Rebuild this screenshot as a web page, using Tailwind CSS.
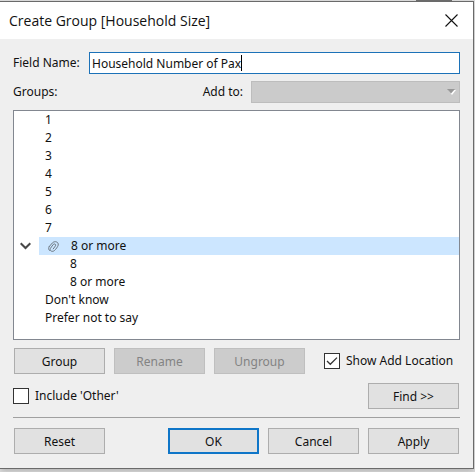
<!DOCTYPE html>
<html lang="en">
<head>
<meta charset="utf-8">
<meta name="viewport" content="width=device-width, initial-scale=1">
<title>Create Group</title>
<script src="https://cdn.jsdelivr.net/npm/@tailwindcss/browser@4"></script>
</head>
<body class="min-h-screen bg-[#d9d9d9] pt-px pr-px font-['Noto_Sans',sans-serif] text-[12px] leading-[18px] text-[#111]">
<div class="absolute top-0 right-[23px] h-px w-9 bg-[#6b6b6b]"></div>
<main role="dialog" aria-labelledby="title" class="border-y border-r border-[#6a6a6a] bg-[#efefef] shadow-md">
  <header class="flex h-[37px] items-center justify-between bg-white pr-[15px] pl-[9px]">
    <h1 id="title" class="font-['Open_Sans',sans-serif] text-[14px]">Create Group [Household Size]</h1>
    <button aria-label="Close" class="flex">
      <svg class="size-[13px]" viewBox="0 0 13 13" fill="none" stroke="#111" stroke-width="1.1"><path d="M.5.5l12 12M12.5.5l-12 12"/></svg>
    </button>
  </header>
  <div class="px-[13px] pt-[13px] pb-[14px]">
    <div class="flex items-center">
      <label for="name" class="w-[76px]">Field Name:</label>
      <div class="relative flex-1">
        <input id="name" type="text" value="Household Number of Pax" class="block h-[22px] w-full border border-[#1c72b8] bg-white px-[2px] pt-px outline-none">
        <span class="absolute top-[3px] left-[152px] h-4 w-px bg-black"></span>
      </div>
    </div>
    <div class="mt-[7px] flex items-center">
      <span id="groups" class="flex-1">Groups:</span>
      <label for="addto" class="mr-2">Add to:</label>
      <div class="relative w-[209px]">
        <select id="addto" disabled class="block h-[22px] w-full appearance-none border border-[#bdbdbd] bg-[#cbcbcb] opacity-100"><option></option></select>
        <svg class="pointer-events-none absolute top-[8px] right-[4px] h-[6px] w-[9px]" viewBox="0 0 9 6"><path d="M1 1h8L5 6z" fill="#fff"/><path d="M0 0h8L4 4.500z" fill="#979797"/></svg>
      </div>
    </div>
    <ul role="tree" aria-labelledby="groups" class="mt-[7px] h-[230px] border border-[#828790] bg-white">
      <li role="treeitem" class="pl-[31px]">1</li>
      <li role="treeitem" class="pl-[31px]">2</li>
      <li role="treeitem" class="pl-[31px]">3</li>
      <li role="treeitem" class="pl-[31px]">4</li>
      <li role="treeitem" class="pl-[31px]">5</li>
      <li role="treeitem" class="pl-[31px]">6</li>
      <li role="treeitem" class="pl-[31px]">7</li>
      <li role="treeitem" aria-expanded="true" aria-selected="true">
        <div class="flex">
          <div class="flex w-[25px] items-center pl-[6px]">
            <svg class="h-[8px] w-[11px]" viewBox="0 0 11 8" fill="none" stroke="#484848" stroke-width="2"><path d="M.7 1.200L5.500 6 10.300 1.200"/></svg>
          </div>
          <div class="flex flex-1 items-center gap-3 bg-[#cce6ff] pl-[9px]">
            <svg class="size-[11px]" viewBox="0 0 11 11" fill="none" stroke="#6d7882" stroke-width="1" stroke-linecap="round"><path d="M1.200 5.600L4.400 1.900C6.300-.2 10.900.4 10.200 4.200C9.600 6 8 8 6.500 9.500C4.500 11.300 1.200 10 2.400 7.400L5.200 3.500C6.400 2.200 8.300 3.200 7.500 4.800L5.200 7.900M1.200 5.600C.3 7.200.4 8.400 1.500 9.500"/></svg>
            <span>8 or more</span>
          </div>
        </div>
        <ul role="group">
          <li role="treeitem" class="pl-[56px]">8</li>
          <li role="treeitem" class="pl-[56px]">8 or more</li>
        </ul>
      </li>
      <li role="treeitem" class="pl-[31px]">Don't know</li>
      <li role="treeitem" class="pl-[31px]">Prefer not to say</li>
    </ul>
    <div class="mt-2 flex items-center gap-[9px] pl-px">
      <button class="h-[26px] w-[91px] border border-[#adadad] bg-[#e1e1e1] pt-px">Group</button>
      <button disabled class="h-[26px] w-[91px] border border-[#bfbfbf] bg-[#cccccc] pt-px text-[#838383]">Rename</button>
      <button disabled class="h-[26px] w-[91px] border border-[#bfbfbf] bg-[#cccccc] pt-px text-[#838383]">Ungroup</button>
      <label class="ml-[10px] flex items-center gap-[6px]">
        <span class="relative flex">
          <input type="checkbox" checked class="size-4 appearance-none border border-[#333] bg-white">
          <svg class="pointer-events-none absolute inset-0 size-4" viewBox="0 0 16 16" fill="none" stroke="#333" stroke-width="1.300"><path d="M3 8l3.300 3.300L13 4.600"/></svg>
        </span>
        Show Add Location
      </label>
    </div>
    <div class="mt-[9px] flex items-center justify-between pr-px">
      <label class="flex items-center gap-[6px]">
        <input type="checkbox" class="size-4 appearance-none border border-[#333] bg-white">
        Include 'Other'
      </label>
      <button class="h-[26px] w-[91px] border border-[#adadad] bg-[#e1e1e1] pt-px">Find &gt;&gt;</button>
    </div>
    <hr class="mt-2 border-t border-[#a0a0a0]">
    <div class="mt-[10px] flex items-center gap-[9px] px-px">
      <button class="mr-auto h-[26px] w-[91px] border border-[#adadad] bg-[#e1e1e1] pt-px">Reset</button>
      <button class="h-[26px] w-[91px] border-2 border-[#0f76c8] bg-[#e1e1e1] pt-px">OK</button>
      <button class="h-[26px] w-[91px] border border-[#adadad] bg-[#e1e1e1] pt-px">Cancel</button>
      <button class="h-[26px] w-[91px] border border-[#adadad] bg-[#e1e1e1] pt-px">Apply</button>
    </div>
  </div>
</main>
</body>
</html>
